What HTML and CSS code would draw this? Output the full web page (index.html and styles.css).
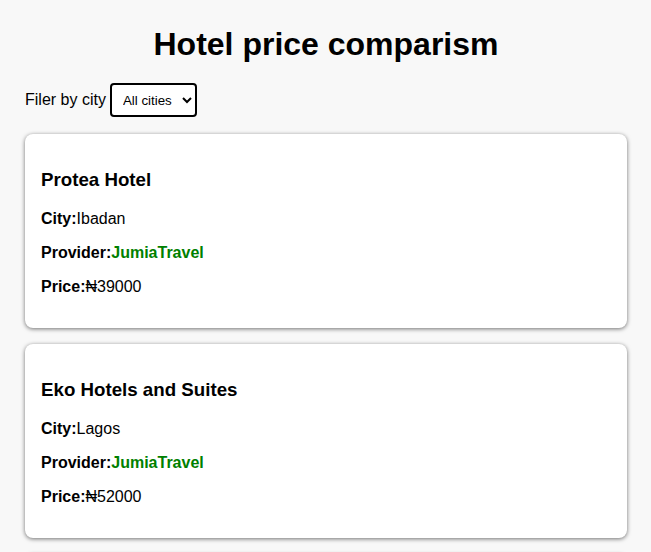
FILE: index.html
```html
<!DOCTYPE html>
<html lang="en">
<head>
<meta charset="utf-8">
<title>Hotel price comparism</title>
<link rel="stylesheet" href="styles.css">
</head>
<body>
<div class="page">
  <h1 class="title">Hotel price comparism</h1>
  <div class="filter">
    <label for="city" class="filter-label">Filer by city</label>
    <select id="city" class="filter-select">
      <option>All cities</option>
      <option>Ibadan</option>
      <option>Lagos</option>
      <option>Abuja</option>
    </select>
  </div>
  <div class="list">
    <div class="card">
      <h3 class="card-title">Protea Hotel</h3>
      <p class="row"><b>City:</b>Ibadan</p>
      <p class="row"><b>Provider:</b><b class="provider">JumiaTravel</b></p>
      <p class="row"><b>Price:</b>₦39000</p>
    </div>
    <div class="card">
      <h3 class="card-title">Eko Hotels and Suites</h3>
      <p class="row"><b>City:</b>Lagos</p>
      <p class="row"><b>Provider:</b><b class="provider">JumiaTravel</b></p>
      <p class="row"><b>Price:</b>₦52000</p>
    </div>
    <div class="card">
      <h3 class="card-title">Transcorp Hilton</h3>
      <p class="row"><b>City:</b>Abuja</p>
      <p class="row"><b>Provider:</b><b class="provider">JumiaTravel</b></p>
      <p class="row"><b>Price:</b>₦65000</p>
    </div>
  </div>
</div>
</body>
</html>
```

FILE: styles.css
```css
html, body {
  margin: 0;
  padding: 0;
  background: #f8f8f8;
  font-family: "Liberation Sans", Arial, "DejaVu Sans", sans-serif;
  color: #000;
}

.page {
  padding: 0 24px 0 25px;
}

.title {
  font-size: 32px;
  font-weight: bold;
  text-align: center;
  margin: 26px 0 20px;
  line-height: 37px;
}

.filter {
  display: flex;
  align-items: center;
  gap: 4px;
  font-size: 16px;
  margin-bottom: 17px;
}

.filter-select {
  height: 34px;
  width: 87px;
  font-family: "Liberation Sans", Arial, sans-serif;
  font-size: 13.33px;
  padding: 0 4px 0 7px;
  border: 2px solid #000;
  border-radius: 4px;
  background: #fff;
  color: #000;
}

.list {
  display: flex;
  flex-direction: column;
  gap: 16px;
}

.card {
  background: #fff;
  border-radius: 8px;
  box-shadow: 0 1px 4px rgba(0, 0, 0, 0.55);
  padding: 16px;
}

.card-title {
  font-size: 18.72px;
  font-weight: bold;
  line-height: 22px;
  margin: 18.72px 0 19.5px;
}

.row {
  font-size: 16px;
  margin: 16px 0;
}

.provider {
  color: #008000;
}
```
